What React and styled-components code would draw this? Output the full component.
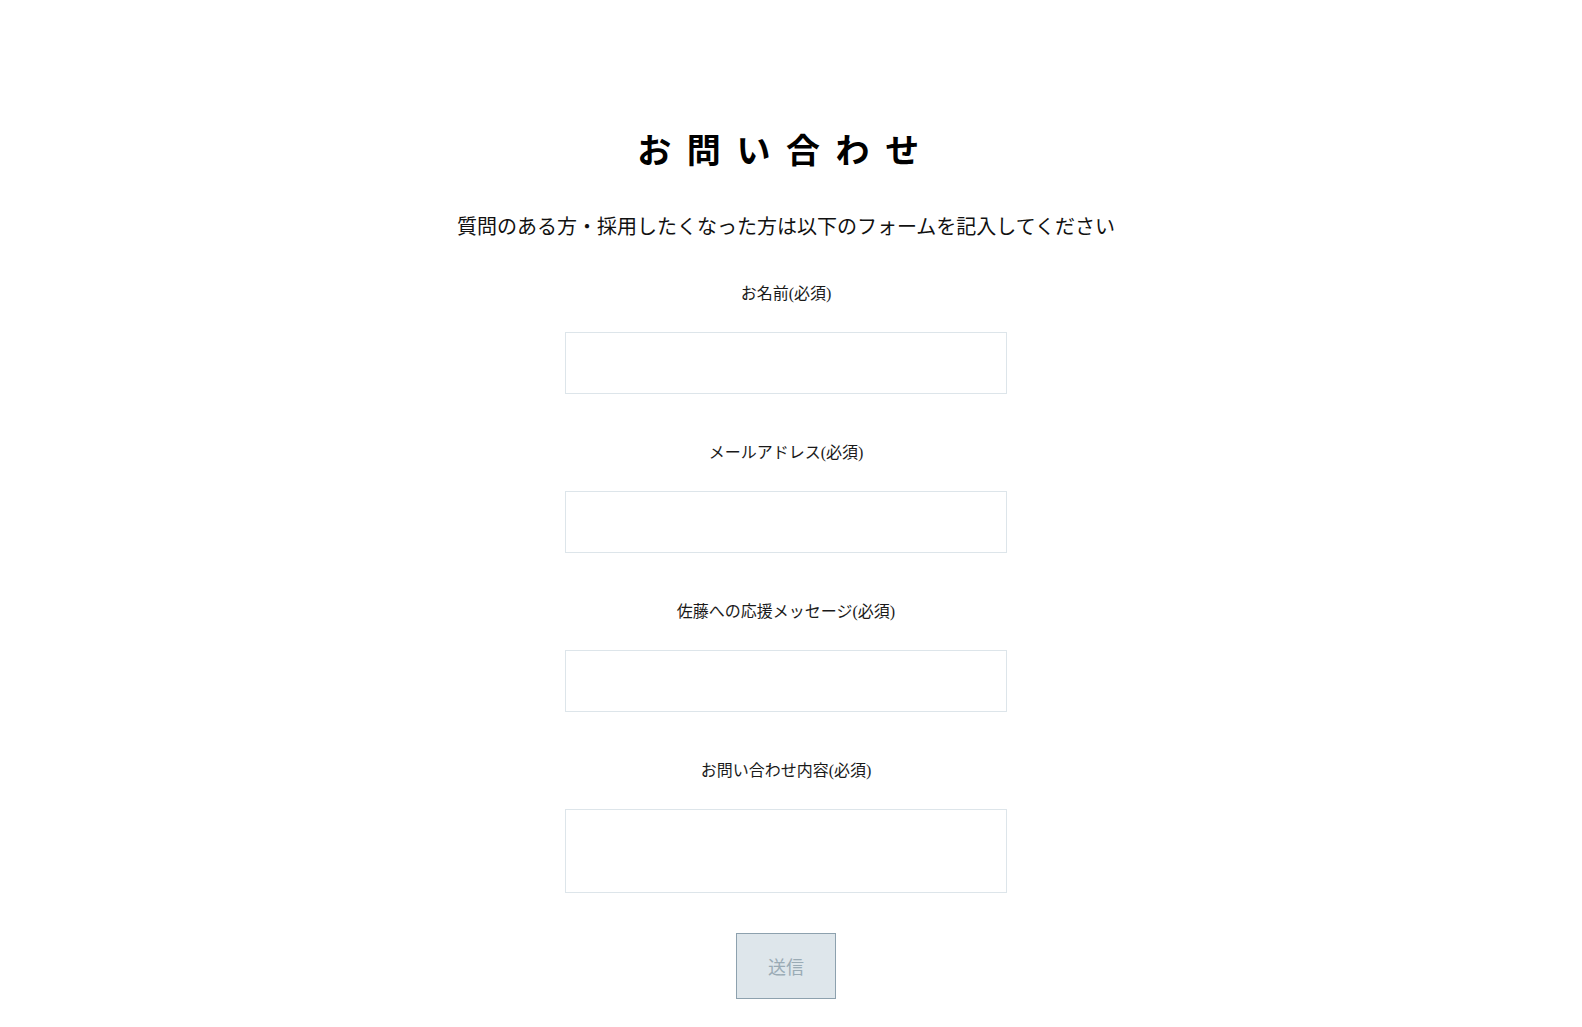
import React from 'react'
import styled, { createGlobalStyle } from 'styled-components'

const GlobalStyle = createGlobalStyle`
  body {
    margin: 0;
    background: #fff;
    font-family: "Noto Sans CJK JP", "Noto Sans", sans-serif;
    color: #111;
  }
`

const Page = styled.main`
  display: flex;
  flex-direction: column;
  align-items: center;
  padding: 123px 10px 30px 0;
`

const Title = styled.h1`
  margin: 0;
  font-size: 34px;
  line-height: 51px;
  font-weight: 700;
  letter-spacing: 15.6px;
  color: #000;
`

const Lead = styled.p`
  margin: 37px 0 41px;
  font-size: 20px;
  line-height: 30px;
  color: #111;
`

const Form = styled.form`
  display: flex;
  flex-direction: column;
  align-items: center;
`

const Field = styled.div`
  display: flex;
  flex-direction: column;
  align-items: center;
  margin-bottom: ${props => props.last ? '40px' : '47px'};
`

const Label = styled.label`
  margin-bottom: 26px;
  font-family: "Liberation Serif", "Noto Sans CJK JP", serif;
  font-size: 16px;
  line-height: 24px;
  color: #1a1a1a;
`

const Input = styled.input`
  box-sizing: border-box;
  width: 442px;
  height: 62px;
  border: 1px solid #dde5ea;
  background: #fff;
  padding: 0 12px;
  font-size: 16px;
  outline: none;
`

const TextArea = styled.textarea`
  box-sizing: border-box;
  width: 442px;
  height: 84px;
  border: 1px solid #dde5ea;
  background: #fff;
  padding: 10px 12px;
  font-size: 16px;
  resize: none;
  display: block;
  outline: none;
`

const Submit = styled.button`
  width: 100px;
  height: 66px;
  border: 1px solid #8da1ae;
  background: #dee6eb;
  color: #9aabb5;
  font-family: "Noto Sans CJK JP", sans-serif;
  font-size: 18px;
  cursor: not-allowed;
`

const fields = [
  { id: 'name', label: 'お名前(必須)', type: 'text' },
  { id: 'email', label: 'メールアドレス(必須)', type: 'email' },
  { id: 'cheer', label: '佐藤への応援メッセージ(必須)', type: 'text' },
]

export default function App() {
  return (
    <>
      <GlobalStyle />
      <Page>
        <Title>お問い合わせ</Title>
        <Lead>質問のある方・採用したくなった方は以下のフォームを記入してください</Lead>
        <Form onSubmit={e => e.preventDefault()}>
          {fields.map(f => (
            <Field key={f.id}>
              <Label htmlFor={f.id}>{f.label}</Label>
              <Input id={f.id} type={f.type} />
            </Field>
          ))}
          <Field last>
            <Label htmlFor="content">お問い合わせ内容(必須)</Label>
            <TextArea id="content" />
          </Field>
          <Submit type="submit" disabled>送信</Submit>
        </Form>
      </Page>
    </>
  )
}
